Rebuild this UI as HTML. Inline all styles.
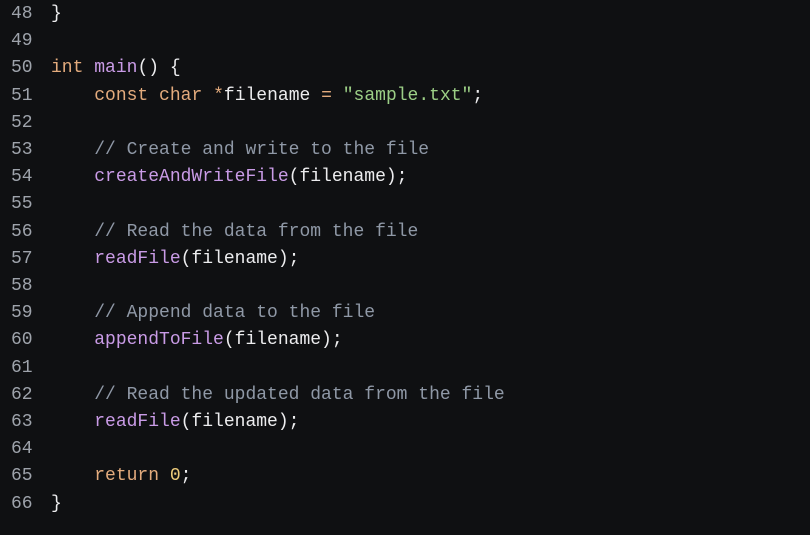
<!DOCTYPE html>
<html><head><style>
html,body{margin:0;background:#0f1012;width:810px;height:535px;overflow:hidden}
pre{margin:0;position:absolute;top:1px;font-family:"Liberation Mono",monospace;font-size:18px;line-height:27.2px;color:#ececee}
#ln{left:11px;color:#9ea3ab}
#code{left:51px}
.k{color:#e3ab7d}.f{color:#c99be6}.s{color:#9ccf86}.c{color:#8f98a6}.o{color:#e3ab7d}.y{color:#eccb7a}
</style></head><body>
<pre id="ln">48
49
50
51
52
53
54
55
56
57
58
59
60
61
62
63
64
65
66</pre>
<pre id="code">}

<span class="k">int</span> <span class="f">main</span>() {
    <span class="k">const</span> <span class="k">char</span> <span class="o">*</span>filename <span class="o">=</span> <span class="s">"sample.txt"</span>;

    <span class="c">// Create and write to the file</span>
    <span class="f">createAndWriteFile</span>(filename);

    <span class="c">// Read the data from the file</span>
    <span class="f">readFile</span>(filename);

    <span class="c">// Append data to the file</span>
    <span class="f">appendToFile</span>(filename);

    <span class="c">// Read the updated data from the file</span>
    <span class="f">readFile</span>(filename);

    <span class="k">return</span> <span class="y">0</span>;
}</pre>
</body></html>
